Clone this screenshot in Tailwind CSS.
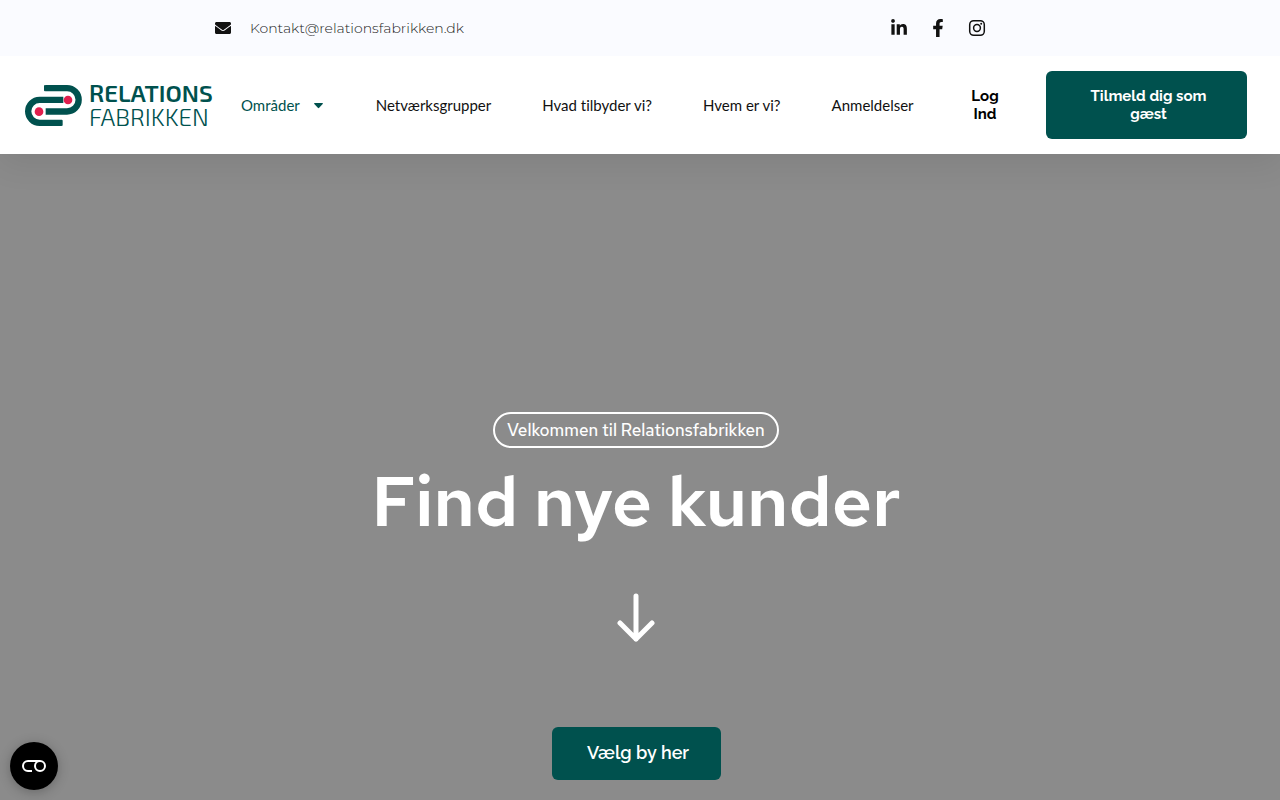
<!DOCTYPE html>
<html lang="da">
<head>
<meta charset="utf-8">
<meta name="viewport" content="width=device-width, initial-scale=1">
<title>Relationsfabrikken</title>
<script src="https://cdn.jsdelivr.net/npm/@tailwindcss/browser@4"></script>
</head>
<body class="flex min-h-screen flex-col bg-[#8b8b8b] font-['Lato',sans-serif] text-[#111]">
<div class="relative z-10 flex h-14 items-center justify-between bg-[#fafbff] pr-[294px] pl-[215px]">
  <a href="mailto:Kontakt@relationsfabrikken.dk" class="flex items-center gap-[19px] font-['Montserrat','Open_Sans',sans-serif] text-sm font-light text-[#222]">
    <svg class="size-4" viewBox="0 0 512 512" fill="#111" aria-hidden="true"><path d="M502.300 190.800c3.900-3.100 9.700-.2 9.700 4.700V400c0 26.500-21.500 48-48 48H48c-26.500 0-48-21.500-48-48V195.600c0-5 5.700-7.800 9.700-4.700 22.400 17.400 52.100 39.500 154.100 113.600 21.100 15.400 56.700 47.800 92.200 47.600 35.700.3 72-32.800 92.300-47.600 102-74.100 131.600-96.300 154-113.700zM256 320c23.200.4 56.600-29.200 73.400-41.400 132.700-96.300 142.800-104.700 173.400-128.700 5.800-4.500 9.200-11.500 9.200-18.900v-19c0-26.500-21.500-48-48-48H48c-26.500 0-48 21.500-48 48v19c0 7.400 3.400 14.300 9.200 18.900 30.600 23.900 40.700 32.400 173.400 128.700 16.800 12.200 50.200 41.800 73.400 41.400z"/></svg>
    <span>Kontakt@relationsfabrikken.dk</span>
  </a>
  <div class="flex items-center gap-[21px]">
    <a href="#" aria-label="LinkedIn"><svg class="h-[18px] w-[18px]" viewBox="0 0 448 512" fill="#111"><path d="M100.280 448H7.400V148.900h92.880zM53.790 108.100C24.090 108.100 0 83.500 0 53.800a53.790 53.790 0 0 1 107.580 0c0 29.700-24.100 54.300-53.790 54.300zM447.900 448h-92.680V302.400c0-34.700-.7-79.200-48.290-79.200-48.290 0-55.690 37.700-55.690 76.700V448h-92.780V148.900h89.080v40.800h1.300c12.400-23.500 42.690-48.300 87.880-48.300 94 0 111.280 61.900 111.280 142.300V448z"/></svg></a>
    <a href="#" aria-label="Facebook"><svg class="h-[18px] w-[18px]" viewBox="0 0 320 512" fill="#111"><path d="M279.140 288l14.220-92.660h-88.910v-60.130c0-25.350 12.420-50.060 52.240-50.060h40.420V6.260S260.430 0 225.360 0c-73.220 0-121.080 44.380-121.080 124.720v70.620H22.890V288h81.390v224h100.170V288z"/></svg></a>
    <a href="#" aria-label="Instagram"><svg class="h-[18px] w-[18px]" viewBox="0 0 18 18" fill="none" stroke="#111" stroke-width="1.500"><rect x="1.700" y="1.700" width="14.600" height="14.600" rx="4"/><circle cx="9" cy="9" r="3.400"/><circle cx="13.200" cy="4.800" r="1" fill="#111" stroke="none"/></svg></a>
  </div>
</div>
<header class="relative flex min-h-[98px] items-center bg-white pr-[33px] pl-[25px] shadow-[0_10px_30px_rgba(0,0,0,0.08)]">
  <a href="#" class="flex w-[188px] shrink-0 items-center gap-[7px] text-[#00514e]" aria-label="Relationsfabrikken">
    <svg class="h-[41px] w-[57px] shrink-0" viewBox="45 45 171 123" fill="none" stroke="#00514e" stroke-width="19" aria-hidden="true">
      <path d="M106 54.500H171A35 35 0 0 1 171 124.500H107"/><path d="M160 89.500H89A34.500 34.500 0 0 0 89 158.500H154"/>
      <path d="M105 48V61M155 152V165" stroke-width="6" stroke-linecap="round"/>
      <circle cx="174" cy="90" r="13" fill="#df1f4d" stroke="none"/><circle cx="87" cy="125" r="13" fill="#df1f4d" stroke="none"/>
    </svg>
    <span class="flex flex-col font-['Exo_2','Exo','Roboto',sans-serif] text-[24px] leading-[24px]"><span class="font-semibold">RELATIONS</span><span class="font-light">FABRIKKEN</span></span>
  </a>
  <nav class="ml-7 flex grow items-center gap-[51px] text-[15px] whitespace-nowrap [font-variant-ligatures:none]" aria-label="Hovedmenu">
    <a href="#" class="flex items-center gap-[14px] pr-[2px] text-[#00514e]">Områder <svg class="mt-[2px] h-[6px] w-[9px]" viewBox="0 0 9 6" fill="#00514e" aria-hidden="true"><path d="M.7 0H8.300Q9.300.2 8.700 1L5.200 4.800Q4.500 5.500 3.800 4.800L.3 1Q-.3.200.7 0Z"/></svg></a>
    <a href="#">Netværksgrupper</a>
    <a href="#">Hvad tilbyder vi?</a>
    <a href="#">Hvem er vi?</a>
    <a href="#">Anmeldelser</a>
  </nav>
  <div class="flex shrink-0 items-center gap-[46px] text-center font-['Raleway','Lato',sans-serif] text-[15px] leading-[18px] font-bold">
    <a href="#" class="w-[30px] text-black">Log Ind</a>
    <a href="#" class="flex h-[68px] w-[201px] items-center justify-center rounded-md bg-[#00514e] pr-9 pl-10 text-white">Tilmeld dig som gæst</a>
  </div>
</header>
<main class="flex grow flex-col items-center justify-end pr-2 pb-5 text-white">
  <p class="flex h-9 items-center rounded-full border-2 border-white px-3 font-['Red_Hat_Text','Red_Hat_Display',sans-serif] text-[17px] leading-[32px] font-medium">Velkommen til Relationsfabrikken</p>
  <h1 class="mt-[13px] font-['Red_Hat_Text','Red_Hat_Display',sans-serif] text-[70px] leading-[80px] font-semibold">Find nye kunder</h1>
  <svg class="mt-[51px] h-[50px] w-10" viewBox="0 0 40 50" fill="none" stroke="white" stroke-width="5" stroke-linecap="round" stroke-linejoin="round" aria-hidden="true"><path d="M20 4V47M4 31L20 47L36 31"/></svg>
  <a href="#" class="mt-[85px] flex h-[53px] w-[169px] items-center justify-center rounded-md bg-[#00514e] pb-[2px] pl-1 font-['Raleway','Lato',sans-serif] text-[18px] font-semibold">Vælg by her</a>
</main>
<button type="button" aria-label="Cookieindstillinger" class="fixed bottom-[10px] left-[10px] flex size-12 items-center justify-center rounded-full bg-black shadow-[0_2px_12px_rgba(0,0,0,0.25)]">
  <svg class="h-[14px] w-[26px]" viewBox="0 0 26 14" fill="none" stroke="white" stroke-width="2"><path d="M19 2H7A5 5 0 0 0 7 12H11"/><circle cx="19" cy="7" r="5"/></svg>
</button>
</body>
</html>
